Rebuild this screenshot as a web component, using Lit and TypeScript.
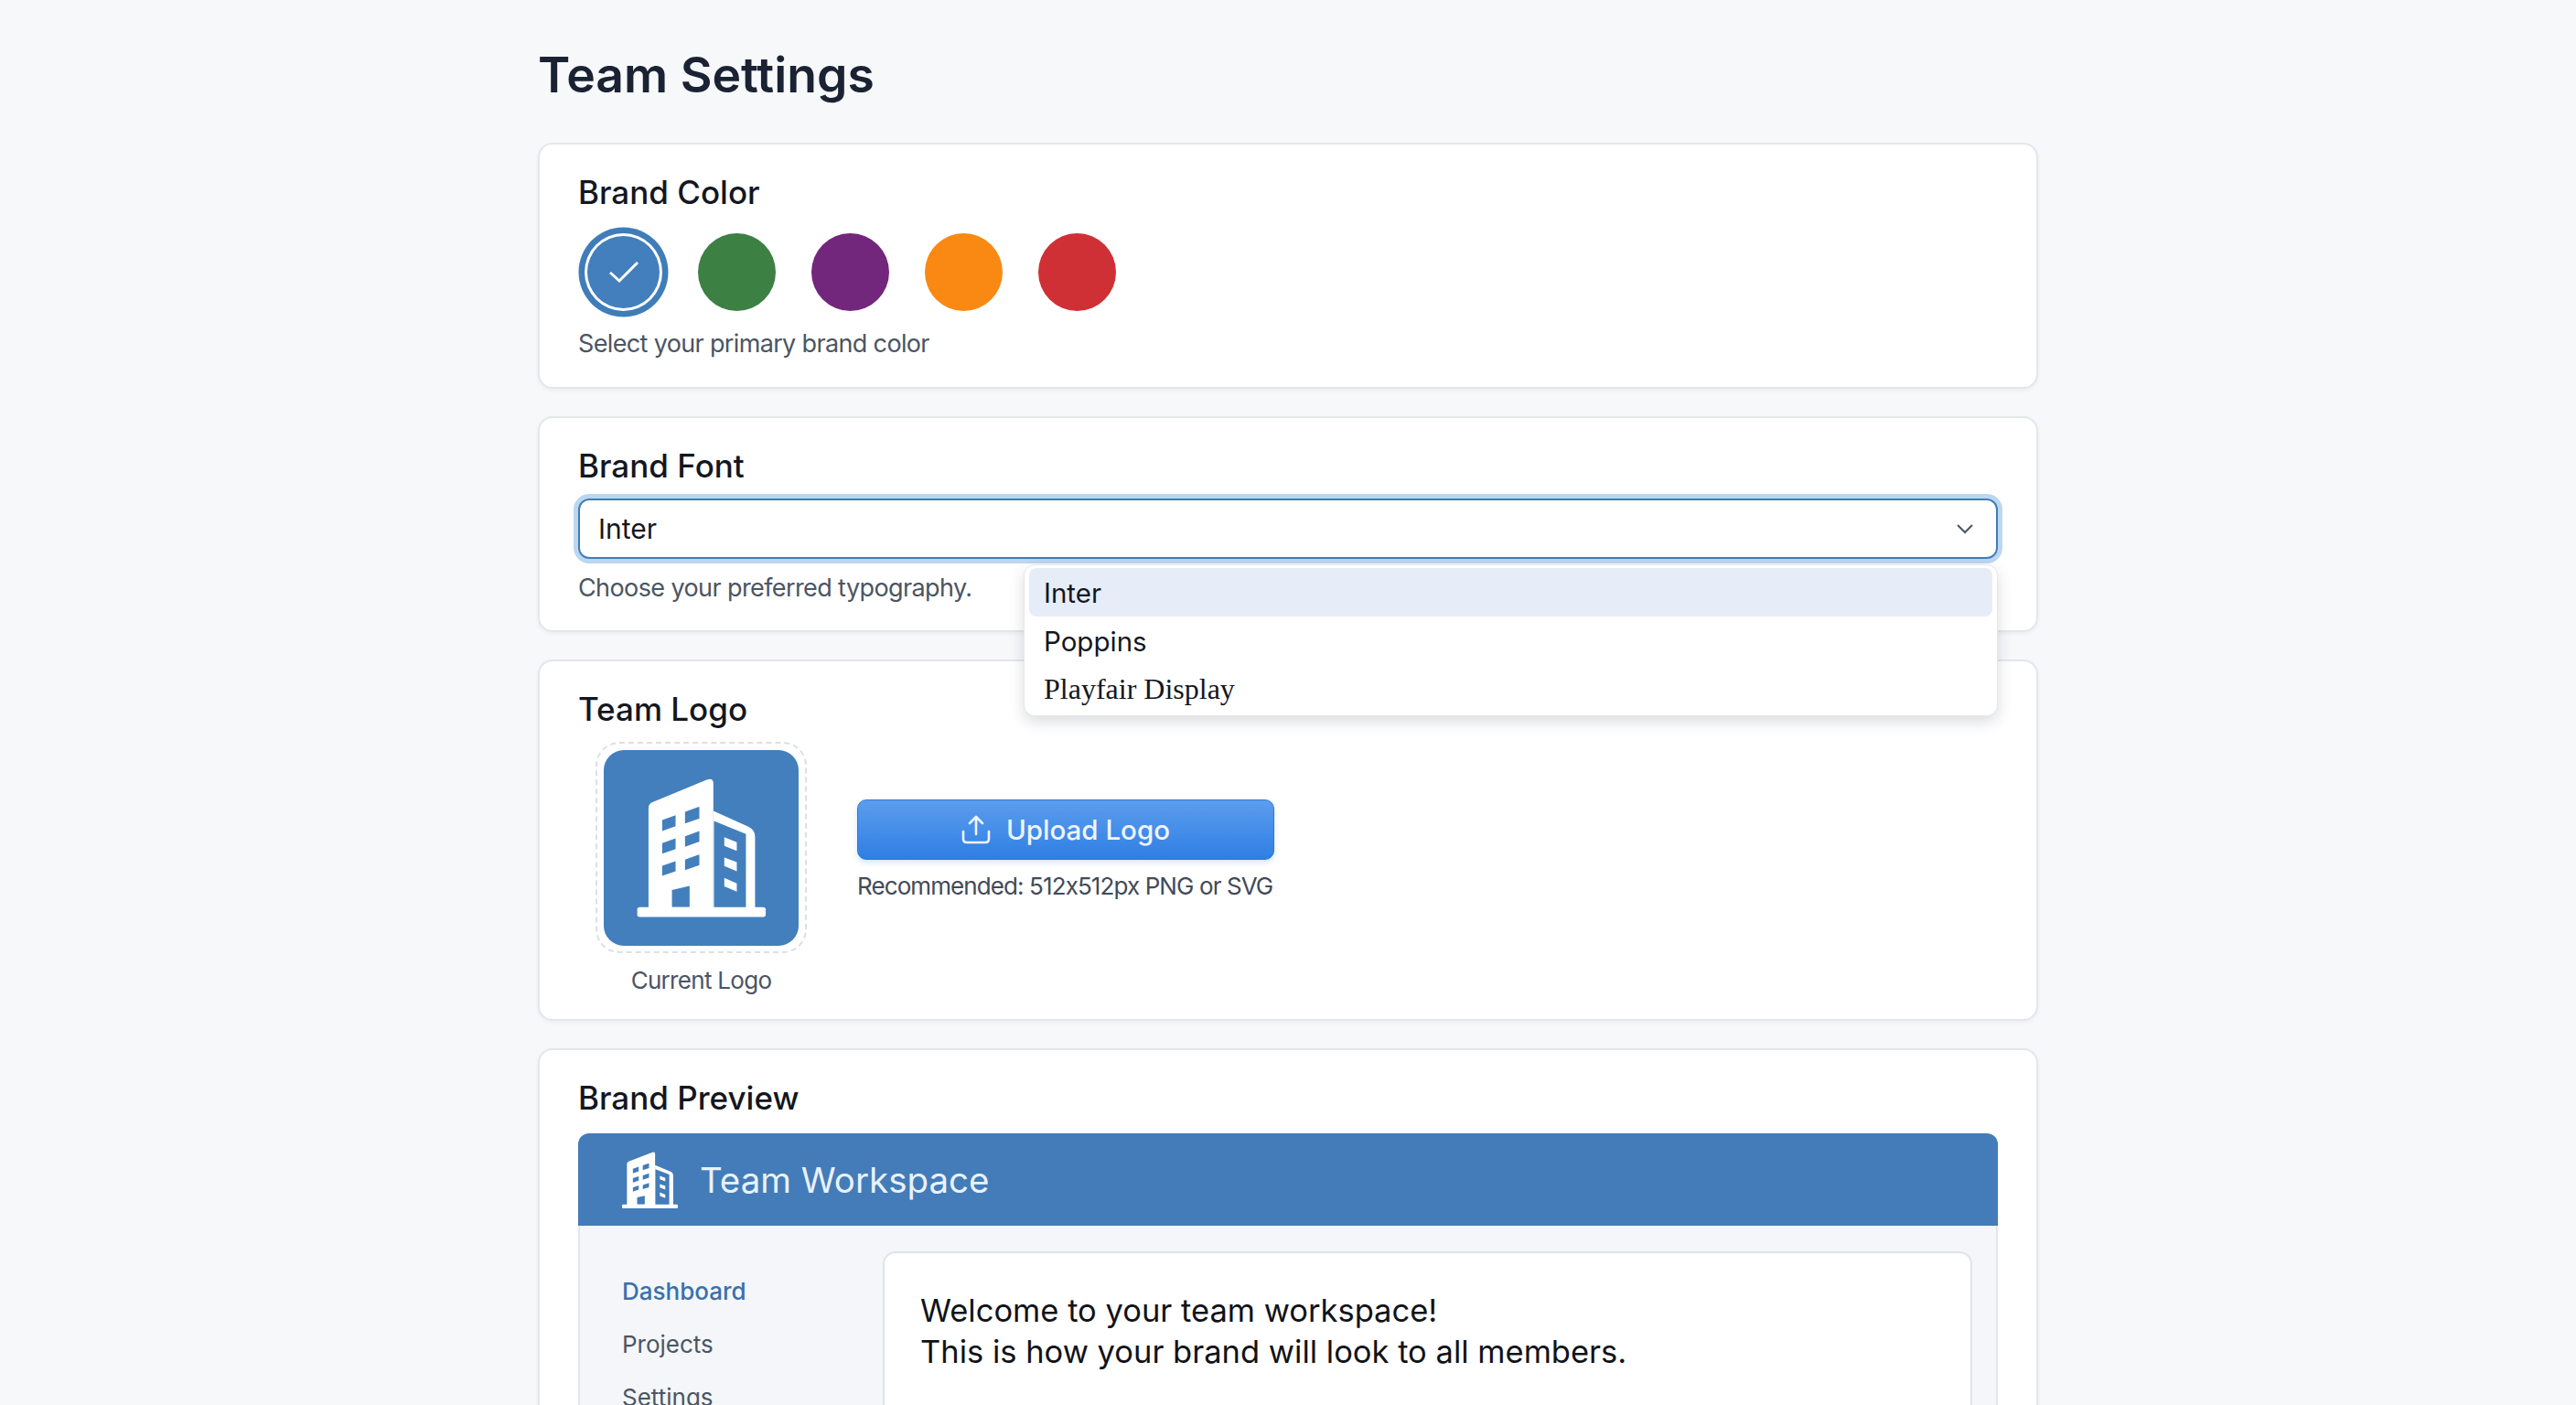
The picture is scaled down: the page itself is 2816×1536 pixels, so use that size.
import { LitElement, html, css, svg } from 'lit'
import { customElement, state } from 'lit/decorators.js'

const COLORS = ['#437fbd', '#3c8044', '#72277c', '#f98913', '#cf3035']
const FONTS = ['Inter', 'Poppins', 'Playfair Display']

// same drawing for the logo tile and the preview header, only the viewBox differs
const building = svg`
  <rect x="110" y="516" width="422" height="32" rx="8" fill="#fff" />
  <path
    fill="#fff"
    fill-rule="evenodd"
    d="M147 530V190Q147 176 160 171L340 97Q360 90 360 110V530Z
       M192 230L236 214V250L192 266Z M267 203L314 186V225L267 241Z
       M192 306L236 290V325L192 340Z M267 283L314 266V301L267 318Z
       M192 380L236 365V398L192 413Z M267 360L314 343V378L267 394Z
       M224 460L282 446V516H224Z"
  />
  <path fill="#fff" d="M360 200L475 252Q497 262 497 285V530H467V276L362 233V530H360Z" />
  <path
    fill="#fff"
    d="M396 286L437 303V331L396 315Z M396 353L437 368V398L396 381Z M396 420L437 438V465L396 448Z"
  />
`

@customElement('app-root')
export class AppRoot extends LitElement {
  static styles = css`
    :host {
      display: block;
      height: 1536px;
      overflow: hidden;
      background: #f6f8fa;
      font-family: 'Inter', 'Liberation Sans', sans-serif;
      font-feature-settings: 'calt' 0;
      color: #14171f;
    }

    .page {
      width: 1640px;
      margin: 0 auto;
      padding-top: 46px;
      display: flex;
      flex-direction: column;
      gap: 30px;
    }

    h1 {
      margin: 0 0 8px;
      font-size: 53.5px;
      line-height: 72px;
      font-weight: 600;
      color: #1a2233;
    }

    .card {
      background: #fff;
      border: 2px solid #e3e6eb;
      border-radius: 16px;
      padding: 30px 42px 29px;
      box-shadow: 0 2px 4px rgba(30, 40, 60, 0.05);
    }

    h2 {
      margin: -1px 0 1px;
      font-size: 35px;
      line-height: 46px;
      font-weight: 500;
      color: #14171f;
    }

    .hint {
      font-size: 27px;
      line-height: 36px;
      letter-spacing: -0.65px;
      color: #4b5563;
    }

    .swatches {
      display: flex;
      gap: 39px;
      padding: 21px 0 0 7px;
      margin-bottom: 18px;
    }

    .swatch {
      width: 85px;
      height: 85px;
      padding: 0;
      border: none;
      border-radius: 50%;
      display: flex;
      align-items: center;
      justify-content: center;
      cursor: pointer;
    }

    .swatch.selected {
      box-shadow: inset 0 0 0 3px #fff, 0 0 0 6.5px #3f7db9;
    }

    .swatch svg {
      width: 34px;
      height: 24px;
    }

    .select-wrap {
      position: relative;
      margin-top: 13px;
    }

    .select {
      height: 66px;
      box-sizing: border-box;
      padding: 0 24px 0 20px;
      border: 2px solid #3f7db9;
      border-radius: 12px;
      box-shadow: 0 0 0 5px #bcd7f0;
      display: flex;
      align-items: center;
      justify-content: space-between;
      font-size: 30px;
    }

    .select svg {
      width: 20px;
      height: 12px;
    }

    .font-card {
      padding-bottom: 28px;
    }

    .font-hint {
      margin-top: 14px;
      letter-spacing: -0.6px;
    }

    .menu {
      position: absolute;
      top: 72px;
      left: 487px;
      right: 0;
      z-index: 2;
      box-sizing: border-box;
      padding: 3px 5px 2px;
      background: #fff;
      border: 1px solid #e4e7ec;
      border-radius: 12px;
      box-shadow: 0 6px 16px rgba(30, 40, 60, 0.16);
    }

    .option {
      height: 53px;
      padding-left: 16px;
      border-radius: 8px;
      display: flex;
      align-items: center;
      font-size: 29.5px;
    }

    .option.active {
      background: #e6edf8;
    }

    .option.serif {
      font-family: 'Liberation Serif', serif;
      font-size: 32px;
    }

    .logo-card {
      padding-bottom: 25px;
    }

    .logo-row {
      display: flex;
      gap: 55px;
      margin-top: 13px;
      padding-left: 19px;
    }

    .logo-col {
      display: flex;
      flex-direction: column;
      align-items: center;
      gap: 13px;
    }

    .logo-frame {
      width: 231px;
      height: 231px;
      box-sizing: border-box;
      border: 2px dashed #dcdfe6;
      border-radius: 26px;
      display: flex;
      align-items: center;
      justify-content: center;
    }

    .tile {
      width: 213px;
      height: 214px;
      border-radius: 22px;
      background: #437fbd;
    }

    .tile svg {
      display: block;
      width: 100%;
      height: 100%;
    }

    .logo-caption {
      font-size: 26px;
      line-height: 34px;
      letter-spacing: -0.7px;
      color: #4b5563;
    }

    .upload-col {
      padding-top: 63px;
      display: flex;
      flex-direction: column;
      gap: 12px;
    }

    .upload {
      width: 456px;
      height: 66px;
      border: 1px solid #2f78d8;
      border-radius: 10px;
      background: linear-gradient(#5c9dee, #2f7fe4);
      box-shadow: 0 3px 6px rgba(47, 127, 228, 0.2);
      color: #eef5ff;
      font: 500 29.5px 'Inter', sans-serif;
      display: flex;
      align-items: center;
      justify-content: center;
      gap: 17px;
      cursor: pointer;
    }

    .upload svg {
      width: 32px;
      height: 32px;
    }

    .upload-hint {
      font-size: 26px;
      line-height: 34px;
      letter-spacing: -0.9px;
      color: #424a57;
      white-space: nowrap;
    }

    .preview {
      margin-top: 16px;
      border-radius: 12px 12px 0 0;
      background: #f4f6f9;
      overflow: hidden;
    }

    .preview-head {
      height: 101px;
      padding-left: 48px;
      background: #437cb8;
      display: flex;
      align-items: center;
      gap: 24px;
      color: #e9f1fa;
      font-size: 38.5px;
    }

    .preview-head svg {
      width: 61px;
      height: 62px;
    }

    .preview-body {
      display: flex;
      padding: 28px 26px 200px 46px;
      border: 2px solid #e3e6eb;
      border-top: none;
    }

    .side {
      width: 285px;
      flex: none;
      padding-top: 26px;
      display: flex;
      flex-direction: column;
      gap: 22px;
      font-size: 26px;
      line-height: 36px;
      color: #4b5563;
    }

    .side .current {
      color: #3a70ad;
      font-weight: 500;
    }

    .main {
      flex: 1;
      padding: 40px 39px 200px;
      background: #fff;
      border: 2px solid #e0e3e9;
      border-radius: 14px;
      font-size: 34.5px;
      line-height: 45px;
      color: #111318;
    }
  `

  @state() color = COLORS[0]
  @state() font = FONTS[0]

  private renderCheck() {
    return html`<svg viewBox="0 1 34 24" fill="none" stroke="#fff" stroke-width="3">
      <path d="M2 13L12 22L32 2" />
    </svg>`
  }

  render() {
    return html`
      <div class="page">
        <h1>Team Settings</h1>

        <section class="card">
          <h2>Brand Color</h2>
          <div class="swatches">
            ${COLORS.map(
              (c) => html`
                <button
                  class="swatch ${c === this.color ? 'selected' : ''}"
                  style="background: ${c}"
                  @click=${() => (this.color = c)}
                >
                  ${c === this.color ? this.renderCheck() : ''}
                </button>
              `
            )}
          </div>
          <div class="hint">Select your primary brand color</div>
        </section>

        <section class="card font-card">
          <h2>Brand Font</h2>
          <div class="select-wrap">
            <div class="select">
              <span>${this.font}</span>
              <svg viewBox="0 0 20 12" fill="none" stroke="#4b5563" stroke-width="2">
                <path d="M2 2L10 10L18 2" />
              </svg>
            </div>
            <div class="menu">
              ${FONTS.map(
                (f) => html`
                  <div
                    class="option ${f === this.font ? 'active' : ''} ${f === 'Playfair Display' ? 'serif' : ''}"
                    @click=${() => (this.font = f)}
                  >
                    ${f}
                  </div>
                `
              )}
            </div>
          </div>
          <div class="hint font-hint">Choose your preferred typography.</div>
        </section>

        <section class="card logo-card">
          <h2>Team Logo</h2>
          <div class="logo-row">
            <div class="logo-col">
              <div class="logo-frame">
                <div class="tile">
                  <svg viewBox="0 0 640 643">${building}</svg>
                </div>
              </div>
              <div class="logo-caption">Current Logo</div>
            </div>
            <div class="upload-col">
              <button class="upload">
                <svg
                  viewBox="0 0 32 32"
                  fill="none"
                  stroke="currentColor"
                  stroke-width="2.6"
                  stroke-linecap="round"
                  stroke-linejoin="round"
                >
                  <path d="M16 21V3M9 9L16 2L23 9" />
                  <path d="M2 18V26Q2 30 6 30H26Q30 30 30 26V18" />
                </svg>
                Upload Logo
              </button>
              <div class="upload-hint">Recommended: 512x512px PNG or SVG</div>
            </div>
          </div>
        </section>

        <section class="card">
          <h2>Brand Preview</h2>
          <div class="preview">
            <div class="preview-head">
              <svg viewBox="110 92 422 456" preserveAspectRatio="none">${building}</svg>
              <span>Team Workspace</span>
            </div>
            <div class="preview-body">
              <nav class="side">
                <div class="current">Dashboard</div>
                <div>Projects</div>
                <div>Settings</div>
              </nav>
              <div class="main">
                Welcome to your team workspace!<br />
                This is how your brand will look to all members.
              </div>
            </div>
          </div>
        </section>
      </div>
    `
  }
}
